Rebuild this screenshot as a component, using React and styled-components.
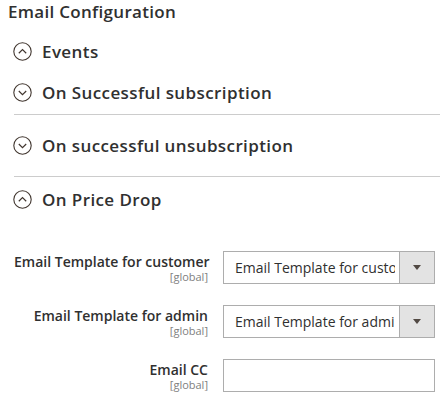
import styled, { createGlobalStyle } from "styled-components";

const Global = createGlobalStyle`
  body {
    margin: 0;
    background: #fff;
    font-family: "Open Sans", "Liberation Sans", sans-serif;
    color: #303030;
  }
`;

const Toggle = ({ open }) => (
  <svg width="19" height="19" viewBox="0 0 19 19">
    <circle cx="9.5" cy="9.5" r="8.7" fill="none" stroke="#41362f" strokeWidth="1.1" />
    <path
      d={open ? "M5.8 11.2 L9.5 7.6 L13.2 11.2" : "M5.8 8 L9.5 11.6 L13.2 8"}
      fill="none"
      stroke="#41362f"
      strokeWidth="1.2"
    />
  </svg>
);

const App = () => {
  return (
    <Wrapper>
      <Global />
      <Title>Email Configuration</Title>
      <Head $top={16}>
        <Toggle open />
        <span>Events</span>
      </Head>
      <Section $pt={17} $pb={10} $first>
        <Head>
          <Toggle />
          <span>On Successful subscription</span>
        </Head>
      </Section>
      <Section $pt={18} $pb={19}>
        <Head>
          <Toggle />
          <span>On successful unsubscription</span>
        </Head>
      </Section>
      <Section $pt={10} $pb={0}>
        <Head>
          <Toggle open />
          <span>On Price Drop</span>
        </Head>
        <Form>
          <Label>
            Email Template for customer
            <small>[global]</small>
          </Label>
          <Select>
            <span>Email Template for customer (Default)</span>
            <Arrow />
          </Select>
          <Label>
            Email Template for admin
            <small>[global]</small>
          </Label>
          <Select>
            <span>Email Template for admin (Default)</span>
            <Arrow />
          </Select>
          <Label>
            Email CC
            <small>[global]</small>
          </Label>
          <Input />
        </Form>
      </Section>
    </Wrapper>
  );
};

const Wrapper = styled.div`
  width: 440px;
  height: 400px;
  overflow: hidden;
  padding: 1px 0 0 0;
  box-sizing: border-box;
`;

const Title = styled.div`
  font-size: 17px;
  font-weight: 600;
  line-height: 22px;
  letter-spacing: 0.3px;
  padding-left: 8px;
  color: #303030;
`;

const Head = styled.div`
  display: flex;
  align-items: center;
  gap: 10px;
  height: 24px;
  margin-top: ${(p) => p.$top || 0}px;
  padding-left: 13px;
  font-size: 17px;
  font-weight: 600;
  letter-spacing: 0.4px;
  color: #303030;
  white-space: nowrap;
  svg {
    flex-shrink: 0;
  }
`;

const Section = styled.div`
  margin-left: 14px;
  border-top: ${(p) => (p.$first ? "none" : "1px solid #cccccc")};
  padding-top: ${(p) => p.$pt}px;
  padding-bottom: ${(p) => p.$pb}px;
  ${Head} {
    padding-left: 0;
    margin-left: -1px;
  }
`;

const Form = styled.div`
  display: grid;
  grid-template-columns: 194px 212px;
  column-gap: 15px;
  row-gap: 21px;
  margin-top: 40px;
  margin-left: -14px;
  padding-left: 14px;
  align-items: start;
`;

const Label = styled.div`
  text-align: right;
  white-space: nowrap;
  font-size: 14px;
  font-weight: 600;
  line-height: 17px;
  padding-top: 2px;
  color: #303030;
  small {
    display: block;
    font-size: 11px;
    font-weight: 400;
    line-height: 13px;
    color: #808080;
  }
`;

const Select = styled.div`
  display: flex;
  height: 33px;
  box-sizing: border-box;
  border: 1px solid #adadad;
  font-size: 14px;
  color: #303030;
  span {
    flex: 1;
    min-width: 0;
    white-space: nowrap;
    overflow: hidden;
    margin: 0 4px 0 11px;
    line-height: 31px;
  }
`;

const Arrow = styled.div`
  width: 34px;
  flex-shrink: 0;
  background: #e3e3e3;
  border-left: 1px solid #adadad;
  display: flex;
  align-items: center;
  justify-content: center;
  &::after {
    content: "";
    border-left: 4px solid transparent;
    border-right: 4px solid transparent;
    border-top: 5px solid #514943;
  }
`;

const Input = styled.div`
  height: 33px;
  box-sizing: border-box;
  border: 1px solid #adadad;
  background: #fff;
`;

export default App;
